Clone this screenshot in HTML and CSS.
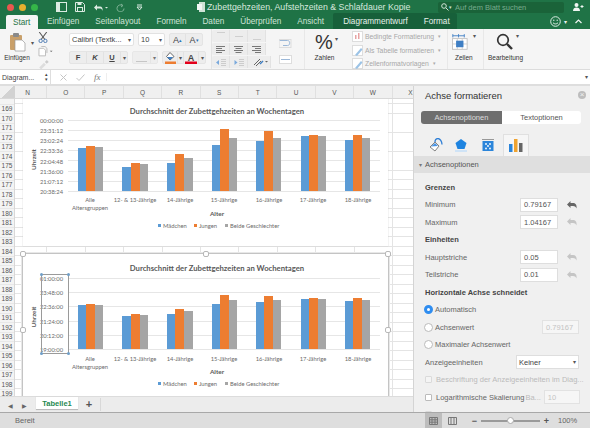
FILE: index.html
```html
<!DOCTYPE html>
<html lang="de">
<head>
<meta charset="utf-8">
<title>Excel</title>
<link rel="stylesheet" href="styles.css">
</head>
<body>
<div class="app">
  <header class="titlebar">
    <div class="lights"><i class="l red"></i><i class="l yellow"></i><i class="l green"></i></div>
    <div class="qa">
      <svg width="11" height="10" viewBox="0 0 11 10"><rect x=".5" y=".5" width="10" height="9" fill="none" stroke="#dcebe2"/><rect x="1" y="1" width="3" height="8" fill="#dcebe2"/></svg>
      <svg width="10" height="10" viewBox="0 0 10 10"><path d="M.5.5h7l2 2v7h-9z" fill="none" stroke="#dcebe2"/><rect x="2.500" y="5.500" width="5" height="4" fill="none" stroke="#dcebe2"/><rect x="2.500" y="1" width="4" height="2" fill="#dcebe2"/></svg>
      <svg width="15" height="9" viewBox="0 0 15 9"><path d="M1 4.500 4 1.500v2h3c2 0 3 1.500 2.500 4.500C9 6 8 5.500 6.500 5.500H4v2z" fill="#dcebe2"/><path d="m12 4 1.500 1.500L15 4z" fill="#dcebe2"/></svg>
      <svg width="9" height="9" viewBox="0 0 9 9"><path d="M6.500 2.500A3.500 3.500 0 1 0 8 5.500M5 1l2 1.500L5 4" fill="none" stroke="#7fb295"/></svg>
      <svg class="qa-more" width="7" height="7" viewBox="0 0 7 7"><path d="M1 1h5M1 3h5L3.500 6z" fill="none" stroke="#dcebe2"/></svg>
    </div>
    <div class="doc">
      <svg width="8" height="10" viewBox="0 0 8 10"><path d="M2 0h6v10H2z" fill="#cfe3d7"/><path d="M0 2h5v6H0z" fill="#f2f7f4"/></svg>
      <span>Zubettgehzeiten, Aufstehzeiten &amp; Schlafdauer Kopie</span>
    </div>
    <div class="search">
      <svg width="8" height="8" viewBox="0 0 8 8"><circle cx="3" cy="3" r="2.300" fill="none" stroke="#cfe3d7"/><path d="m5 5 2.500 2.500" stroke="#cfe3d7"/></svg>
      <span class="search-caret">▾</span><span>Auf dem Blatt suchen</span>
    </div>
    <svg class="person" width="11" height="8" viewBox="0 0 11 8"><circle cx="3.500" cy="2" r="2" fill="#f0f6f2"/><path d="M0 8c0-2.500 1.500-3.500 3.500-3.500S7 5.500 7 8z" fill="#f0f6f2"/><path d="M7.500 3.500h3M9 2v3" stroke="#f0f6f2"/></svg>
  </header>

  <nav class="tabs">
    <span class="tab active">Start</span>
    <span class="tab">Einfügen</span>
    <span class="tab">Seitenlayout</span>
    <span class="tab">Formeln</span>
    <span class="tab">Daten</span>
    <span class="tab">Überprüfen</span>
    <span class="tab">Ansicht</span>
    <div class="chart-tabs">
      <span class="tab strong">Diagrammentwurf</span>
      <span class="tab strong">Format</span>
    </div>
    <div class="tabs-end">
      <svg width="11" height="11" viewBox="0 0 11 11"><circle cx="5.500" cy="5.500" r="4.800" fill="none" stroke="#dcebe2"/><circle cx="3.800" cy="4.300" r=".7" fill="#dcebe2"/><circle cx="7.200" cy="4.300" r=".7" fill="#dcebe2"/><path d="M3 6.800c1.500 1.500 3.500 1.500 5 0" fill="none" stroke="#dcebe2"/></svg>
      <span class="mini">▾</span>
      <svg width="7" height="5" viewBox="0 0 7 5"><path d="m.5 4 3-3 3 3" fill="none" stroke="#f0f6f2" stroke-width="1.200"/></svg>
    </div>
  </nav>

  <section class="ribbon">
    <div class="g-clip">
      <div class="paste">
        <svg width="17" height="20" viewBox="0 0 17 20"><rect x="1" y="3" width="12" height="15" rx="1" fill="#c9a06a"/><rect x="4" y="1" width="6" height="4" rx="1" fill="#8a8a8a"/><path d="M6 8h7l3 3v8H6z" fill="#fff" stroke="#9a9a9a" stroke-width=".7"/></svg>
        <span class="glabel">Einfügen</span>
      </div>
      <span class="mini paste-caret">▾</span>
      <div class="clip-tools">
        <svg width="10" height="12" viewBox="0 0 10 12"><path d="M1 0l6 8M9 0 3 8" stroke="#555" stroke-width="1.100"/><circle cx="2.500" cy="9.500" r="1.800" fill="none" stroke="#4a78b0"/><circle cx="7.500" cy="9.500" r="1.800" fill="none" stroke="#4a78b0"/></svg>
        <svg width="16" height="11" viewBox="0 0 16 11"><path d="M.5 2.500h5l2 2v6h-7z" fill="#fff" stroke="#bbb"/><path d="M3 .5h4l2 2v5" fill="none" stroke="#bbb"/><path d="m12 5 1.500 1.500L15 5z" fill="#666"/></svg>
        <svg width="11" height="10" viewBox="0 0 11 10"><path d="M1 8 6 3l2 2-5 5z" fill="#ddd"/><path d="m7 2 2-2 2 2-2 2z" fill="#ccc"/></svg>
      </div>
    </div>

    <div class="g-font">
      <div class="rrow">
        <div class="combo w-font"><span>Calibri (Textk...</span><b class="mini">▾</b></div>
        <div class="combo w-size"><span>10</span><b class="mini">▾</b></div>
        <div class="btns"><span class="btn w-a big">A<em class="blue">▴</em></span><span class="btn w-a">A<em class="blue">▾</em></span></div>
      </div>
      <div class="rrow">
        <div class="btns"><span class="btn w-f">F</span><span class="btn w-f ital">K</span><span class="btn w-f under">U</span><span class="btn w-c"><b class="mini">▾</b></span></div>
        <div class="btns dim-btn"><span class="btn w-b"><i class="border-ico"></i></span><span class="btn w-c"><b class="mini">▾</b></span></div>
        <div class="btns">
          <span class="btn w-col"><svg width="11" height="12" viewBox="0 0 11 12"><path d="M5 .5 9 4.500 5 8 1.500 4.500z" fill="#fff" stroke="#666"/><path d="M2 5h6L5 8z" fill="#3f7fc4"/><rect y="9.500" width="11" height="2.500" fill="#ed7d31"/></svg></span><span class="btn w-c"><b class="mini">▾</b></span>
          <span class="btn w-col"><svg width="12" height="12" viewBox="0 0 12 12"><text class="fc-a" x="6" y="8.500" text-anchor="middle">A</text><rect y="9.500" width="12" height="2.500" fill="#e3001b"/></svg></span><span class="btn w-c"><b class="mini">▾</b></span>
        </div>
      </div>
    </div>

    <div class="g-align">
      <div class="arow">
        <span class="abtn"><i class="ln top"></i></span><span class="abtn"><i class="ln mid"></i></span><span class="abtn"><i class="ln bot"></i></span>
      </div>
      <div class="arow">
        <span class="abtn"><svg width="9" height="7" viewBox="0 0 9 7"><path d="M0 .5h9M0 2.500h6M0 4.500h9M0 6.500h6" stroke="#777"/></svg></span>
        <span class="abtn"><svg width="9" height="7" viewBox="0 0 9 7"><path d="M0 .5h9M1.500 2.500h6M0 4.500h9M1.500 6.500h6" stroke="#777"/></svg></span>
        <span class="abtn"><svg width="9" height="7" viewBox="0 0 9 7"><path d="M0 .5h9M3 2.500h6M0 4.500h9M3 6.500h6" stroke="#777"/></svg></span>
      </div>
      <div class="arow">
        <span class="abtn"><svg width="10" height="7" viewBox="0 0 10 7"><path d="M5 .5h5M5 2.500h5M5 4.500h5M5 6.500h5" stroke="#ccc"/><path d="M0 3.500 3 1v5z" fill="#7aa9dc"/></svg></span>
        <span class="abtn"><svg width="10" height="7" viewBox="0 0 10 7"><path d="M5 .5h5M5 2.500h5M5 4.500h5M5 6.500h5" stroke="#ccc"/><path d="M3.500 3.500.5 1v5z" fill="#7aa9dc"/></svg></span>
        <span class="abtn wide"><svg width="15" height="10" viewBox="0 0 15 10"><path d="m1 8 6-6M3 9l5-5" stroke="#666"/><path d="m7 7 3-3" stroke="#3f7fc4" stroke-width="1.400"/><path d="m12 4 1.500 1.500L15 4z" fill="#666"/></svg></span>
      </div>
    </div>

    <div class="g-wrap">
      <svg width="13" height="9" viewBox="0 0 13 9"><path d="M.5 1.500h8c3 0 3 5 0 5H4" fill="none" stroke="#9cb8d8"/><rect y=".5" width="12" height="8" fill="none" stroke="#ddd"/></svg>
      <svg width="13" height="9" viewBox="0 0 13 9"><rect x=".5" y=".5" width="12" height="8" fill="#fff" stroke="#ddd"/><path d="M2 4.500h9" stroke="#9cb8d8"/></svg>
    </div>

    <div class="g-num">
      <div class="pct">%<span class="mini">▾</span></div>
      <span class="glabel">Zahlen</span>
    </div>

    <div class="g-style">
      <div class="srow"><svg width="11" height="11" viewBox="0 0 11 11"><rect x=".5" y=".5" width="10" height="10" fill="#fff" stroke="#ddd"/><path d="M3 8V4h1.500v4zM6 8V2h1.500v6z" fill="#e7a3a3"/></svg><span>Bedingte Formatierung</span><b class="mini">▾</b></div>
      <div class="srow"><svg width="11" height="11" viewBox="0 0 11 11"><rect x=".5" y=".5" width="10" height="10" fill="#fff" stroke="#ddd"/><path d="m3 10 6-7 1.500 1.500L5 11z" fill="#9cc3e6"/></svg><span>Als Tabelle formatieren</span><b class="mini">▾</b></div>
      <div class="srow"><svg width="11" height="11" viewBox="0 0 11 11"><rect x=".5" y=".5" width="10" height="10" fill="#fff" stroke="#ddd"/><path d="m3 10 6-7 1.500 1.500L5 11z" fill="#9cc3e6"/></svg><span>Zellenformatvorlagen</span><b class="mini">▾</b></div>
    </div>

    <div class="g-cells">
      <div class="bigico">
        <svg width="18" height="17" viewBox="0 0 22 20"><path d="M1 1v4M8 1v4M15 1v4M1 3h14" stroke="#3f7fc4" stroke-width="1.100"/><rect x=".5" y="6.500" width="18" height="13" fill="#fff" stroke="#bbb"/><path d="M6.500 6.500v13M12.500 6.500v13M.5 13h18" stroke="#ccc"/><rect x="5" y="9" width="9" height="8" fill="#3f7fc4"/></svg>
        <span class="mini">▾</span>
      </div>
      <span class="glabel">Zellen</span>
    </div>

    <div class="g-edit">
      <div class="bigico">
        <svg width="17" height="17" viewBox="0 0 17 17"><circle cx="7" cy="7" r="5.300" fill="none" stroke="#333" stroke-width="1.700"/><path d="m11 11 5 5" stroke="#333" stroke-width="2.400"/></svg>
        <span class="mini">▾</span>
      </div>
      <span class="glabel">Bearbeitung</span>
    </div>
  </section>

  <section class="formula">
    <div class="namebox"><span>Diagram...</span><span class="stepper"><i>▴</i><i>▾</i></span></div>
    <div class="fx-tools">
      <svg width="7" height="7" viewBox="0 0 7 7"><path d="m.5.5 6 6M6.500.5l-6 6" stroke="#c4c4c4"/></svg>
      <svg width="9" height="7" viewBox="0 0 9 7"><path d="m.5 4 2.500 2.500L8.500.5" fill="none" stroke="#c4c4c4"/></svg>
      <span class="fx">fx</span>
    </div>
    <div class="finput"><span class="mini">▾</span></div>
  </section>

  <div class="main">
    <div class="left">
      <div class="colhead">
        <span class="corner"></span>
        <span class="col c-n">N</span><span class="col">O</span><span class="col">P</span><span class="col">Q</span><span class="col">R</span><span class="col">S</span><span class="col">T</span><span class="col">U</span><span class="col">V</span><span class="col">W</span><span class="col c-x">X</span>
      </div>
      <div class="sheet">
        <div class="rows">
          <span class="row r-cut"></span><span class="row">169</span><span class="row">170</span><span class="row">171</span><span class="row">172</span><span class="row">173</span><span class="row">174</span><span class="row">175</span><span class="row">176</span><span class="row">177</span><span class="row">178</span><span class="row">179</span><span class="row">180</span><span class="row">181</span><span class="row">182</span><span class="row">183</span><span class="row">184</span><span class="row">185</span><span class="row">186</span><span class="row">187</span><span class="row">188</span><span class="row">189</span><span class="row">190</span><span class="row">191</span><span class="row">192</span><span class="row">193</span><span class="row">194</span><span class="row">195</span><span class="row">196</span><span class="row">197</span><span class="row">198</span><span class="row">199</span>
        </div>
        <div class="cells"></div>

        <svg class="chart chart-a" width="365" height="147" viewBox="23 100 365 147">
          <rect x="23" y="100" width="365" height="147" fill="#fff"/>
          <text class="ct" x="217" y="115" text-anchor="middle">Durchschnitt der Zubettgehzeiten an Wochentagen</text>
          <g class="grid"><path d="M68 121.500h312M68 131.500h312M68 141.500h312M68 151.500h312M68 161.500h312M68 172.500h312M68 182.500h312M68 192.500h312"/></g>
          <g class="ylab" text-anchor="end"><text x="63" y="124">00:00:00</text><text x="63" y="134">23:31:12</text><text x="63" y="144">23:02:24</text><text x="63" y="154">22:33:36</text><text x="63" y="164.500">22:04:48</text><text x="63" y="175">21:36:00</text><text x="63" y="185">21:07:12</text><text x="63" y="195">20:38:24</text></g>
          <g class="bb"><rect x="78" y="149" width="8" height="43"/><rect x="122" y="168" width="9" height="24"/><rect x="167" y="164" width="8" height="28"/><rect x="212" y="146" width="8" height="46"/><rect x="256" y="142" width="8" height="50"/><rect x="301" y="137" width="8" height="55"/><rect x="345" y="141" width="8" height="51"/></g>
          <g class="bo"><rect x="86" y="147" width="9" height="45"/><rect x="131" y="164" width="9" height="28"/><rect x="175" y="155" width="9" height="37"/><rect x="220" y="130" width="9" height="62"/><rect x="264" y="132" width="9" height="60"/><rect x="309" y="136" width="9" height="56"/><rect x="353" y="136" width="9" height="56"/></g>
          <g class="bg"><rect x="95" y="148" width="8" height="44"/><rect x="140" y="165" width="8" height="27"/><rect x="184" y="159" width="9" height="33"/><rect x="229" y="139" width="8" height="53"/><rect x="273" y="139" width="8" height="53"/><rect x="318" y="137" width="8" height="55"/><rect x="362" y="139" width="8" height="53"/></g>
          <g class="xlab" text-anchor="middle"><text x="90" y="203">Alle</text><text x="90" y="211">Altersgruppen</text><text x="135" y="203">12- &amp; 13-Jährige</text><text x="180" y="203">14-Jährige</text><text x="224" y="203">15-Jährige</text><text x="269" y="203">16-Jährige</text><text x="313" y="203">17-Jährige</text><text x="358" y="203">18-Jährige</text></g>
          <text class="at" x="217" y="216.500" text-anchor="middle">Alter</text>
          <text class="at" transform="translate(35.500 160.500) rotate(-90)" text-anchor="middle">Uhrzeit</text>
          <g class="leg"><rect class="lb" x="158" y="225" width="3" height="3"/><text x="163" y="229">Mädchen</text><rect class="lo" x="194" y="225" width="3" height="3"/><text x="199" y="229">Jungen</text><rect class="lg" x="225" y="225" width="3" height="3"/><text x="230" y="229">Beide Geschlechter</text></g>
        </svg>

        <div class="frame">
          <svg class="chart-in" width="365" height="143" viewBox="23 255 365 143">
            <rect x="23" y="255" width="365" height="143" fill="#fff"/>
            <text class="ct" x="217" y="272" text-anchor="middle">Durchschnitt der Zubettgehzeiten an Wochentagen</text>
            <g class="grid"><path d="M68 279.500h312M68 293.500h312M68 307.500h312M68 322.500h312M68 336.500h312M68 350.500h312"/></g>
            <g class="bb"><rect x="78" y="306" width="8" height="44"/><rect x="122" y="317" width="9" height="33"/><rect x="167" y="315" width="8" height="35"/><rect x="212" y="305" width="8" height="45"/><rect x="256" y="303" width="8" height="47"/><rect x="301" y="300" width="8" height="50"/><rect x="345" y="302" width="8" height="48"/></g>
            <g class="bo"><rect x="86" y="305" width="9" height="45"/><rect x="131" y="315" width="9" height="35"/><rect x="175" y="310" width="9" height="40"/><rect x="220" y="296" width="9" height="54"/><rect x="264" y="297" width="9" height="53"/><rect x="309" y="299" width="9" height="51"/><rect x="353" y="299" width="9" height="51"/></g>
            <g class="bg"><rect x="95" y="306" width="8" height="44"/><rect x="140" y="316" width="8" height="34"/><rect x="184" y="312" width="9" height="38"/><rect x="229" y="301" width="8" height="49"/><rect x="273" y="301" width="8" height="49"/><rect x="318" y="300" width="8" height="50"/><rect x="362" y="301" width="8" height="49"/></g>
            <g class="ylab" text-anchor="end"><text x="63" y="282">01:00:00</text><text x="63" y="296">23:48:00</text><text x="63" y="310">22:36:00</text><text x="63" y="325">21:24:00</text><text x="63" y="339">20:12:00</text><text x="63" y="353">19:00:00</text></g>
            <rect class="sel" x="41.500" y="275.500" width="27" height="79"/>
            <g class="seld"><circle cx="41.500" cy="275.500" r="1.500"/><circle cx="68.500" cy="275.500" r="1.500"/><circle cx="41.500" cy="354.500" r="1.500"/><circle cx="68.500" cy="354.500" r="1.500"/></g>
            <g class="xlab" text-anchor="middle"><text x="90" y="361.500">Alle</text><text x="90" y="369.500">Altersgruppen</text><text x="135" y="361.500">12- &amp; 13-Jährige</text><text x="180" y="361.500">14-Jährige</text><text x="224" y="361.500">15-Jährige</text><text x="269" y="361.500">16-Jährige</text><text x="313" y="361.500">17-Jährige</text><text x="358" y="361.500">18-Jährige</text></g>
            <text class="at" x="217" y="375" text-anchor="middle">Alter</text>
            <text class="at" transform="translate(35.500 318) rotate(-90)" text-anchor="middle">Uhrzeit</text>
            <g class="leg"><rect class="lb" x="158" y="383" width="3" height="3"/><text x="163" y="387">Mädchen</text><rect class="lo" x="194" y="383" width="3" height="3"/><text x="199" y="387">Jungen</text><rect class="lg" x="225" y="383" width="3" height="3"/><text x="230" y="387">Beide Geschlechter</text></g>
          </svg>
          <i class="h h-tl"></i><i class="h h-tm"></i><i class="h h-tr"></i><i class="h h-ml"></i><i class="h h-mr"></i>
        </div>
      </div>
      <div class="sheettabs">
        <span class="arrow">◀</span><span class="arrow">▶</span>
        <span class="stab">Tabelle1</span>
        <span class="addtab">+</span>
      </div>
    </div>

    <aside class="panel">
      <div class="p-title"><span>Achse formatieren</span><i class="p-close">×</i></div>
      <div class="seg"><span class="seg-on">Achsenoptionen</span><span class="seg-off">Textoptionen</span></div>
      <div class="p-icons">
        <span class="p-ic"><svg width="14" height="14" viewBox="0 0 14 14"><path d="M1 9 6 4l4 4-4 5z" fill="#fff" stroke="#666" stroke-width=".8"/><path d="M6 4c0-2 1-3.500 3-3.500s4 3 4 6" fill="none" stroke="#2f7fd6" stroke-width="1.300"/><path d="M2 8.500 6 5l3 3z" fill="#4a94e4"/></svg></span>
        <span class="p-ic"><svg width="12" height="14" viewBox="0 0 12 14"><path d="M6 1l5.500 4-2 6h-7l-2-6z" fill="#1f84e0"/><rect y="12" width="12" height="2" fill="#cfe3f6"/></svg></span>
        <span class="p-ic"><svg width="12" height="12" viewBox="0 0 12 12"><rect x=".5" y="2" width="11" height="10" fill="#2b85da"/><path d="M0 .5h12" stroke="#999"/><g fill="#fff"><circle cx="4" cy="5" r=".9"/><circle cx="8" cy="5" r=".9"/><circle cx="6" cy="7" r=".9"/><circle cx="4" cy="9.500" r=".9"/><circle cx="8" cy="9.500" r=".9"/></g></svg></span>
        <span class="p-ic on"><svg width="14" height="13" viewBox="0 0 14 13"><rect x="0" y="5" width="3.500" height="8" fill="#2b85da"/><rect x="5" y="0" width="3.500" height="13" fill="#f0a32f"/><rect x="10" y="4" width="3.500" height="9" fill="#666"/></svg></span>
      </div>
      <div class="p-sec"><b class="tri">▾</b>Achsenoptionen</div>
      <div class="p-body">
        <div class="pr bold">Grenzen</div>
        <div class="pr"><label>Minimum</label><span class="inp">0.79167</span><svg class="undo" width="10" height="8" viewBox="0 0 10 8"><path d="M0 3.500 3.500 0v2H6c3 0 4 2.500 3.500 5.500C9 6 8 5 6 5H3.500v2z" fill="#666"/></svg></div>
        <div class="pr"><label>Maximum</label><span class="inp">1.04167</span><svg class="undo faint" width="10" height="8" viewBox="0 0 10 8"><path d="M0 3.500 3.500 0v2H6c3 0 4 2.500 3.500 5.500C9 6 8 5 6 5H3.500v2z" fill="#666"/></svg></div>
        <div class="pr bold">Einheiten</div>
        <div class="pr"><label>Hauptstriche</label><span class="inp">0.05</span><svg class="undo faint" width="10" height="8" viewBox="0 0 10 8"><path d="M0 3.500 3.500 0v2H6c3 0 4 2.500 3.500 5.500C9 6 8 5 6 5H3.500v2z" fill="#666"/></svg></div>
        <div class="pr"><label>Teilstriche</label><span class="inp">0.01</span><svg class="undo faint" width="10" height="8" viewBox="0 0 10 8"><path d="M0 3.500 3.500 0v2H6c3 0 4 2.500 3.500 5.500C9 6 8 5 6 5H3.500v2z" fill="#666"/></svg></div>
        <div class="pr bold">Horizontale Achse schneidet</div>
        <div class="pr"><i class="radio on"></i><label>Automatisch</label></div>
        <div class="pr"><i class="radio"></i><label>Achsenwert</label><span class="inp off">0.79167</span></div>
        <div class="pr"><i class="radio"></i><label>Maximaler Achsenwert</label></div>
        <div class="pr"><label>Anzeigeeinheiten</label><span class="sel-box"><span>Keiner</span><b class="mini">▾</b></span></div>
        <div class="pr"><i class="check off"></i><label class="dis">Beschriftung der Anzeigeeinheiten im Diag...</label></div>
        <div class="pr"><i class="check"></i><label>Logarithmische Skalierung</label><span class="ba">Ba...</span><span class="inp off base">10</span></div>
        <div class="pr"><i class="check off"></i></div>
      </div>
    </aside>
  </div>

  <footer class="status">
    <span class="ready">Bereit</span>
    <span class="view on"><svg width="9" height="8" viewBox="0 0 9 8"><path d="M.5.5h8v7h-8zM3 .5v7M6 .5v7M.5 2.800h8M.5 5.200h8" fill="none" stroke="#777"/></svg></span>
    <span class="view"><svg width="9" height="8" viewBox="0 0 9 8"><path d="M.5.5h8v7h-8zM3 .5v7M6 .5v7" fill="none" stroke="#777"/></svg></span>
    <span class="zm">−</span>
    <span class="slider"><i></i></span>
    <span class="zm">+</span>
    <span class="pctz">100%</span>
  </footer>
</div>
</body>
</html>
```

FILE: styles.css
```css
* { box-sizing: border-box; }
html, body { margin: 0; padding: 0; }
body { background: #fff; font-family: "Liberation Sans", Arial, sans-serif; color: #333; }
i, em { font-style: normal; }
.app { width: 590px; height: 429px; overflow: hidden; display: flex; flex-direction: column; }
.mini { font-size: 6px; font-weight: normal; color: #555; line-height: 1; }

/* title bar */
.titlebar { height: 14px; background: #1f7346; display: flex; align-items: center; color: #d7e8de; flex: none; }
.lights { display: flex; gap: 5px; margin-left: 7px; width: 44px; }
.l { width: 7px; height: 7px; border-radius: 50%; display: block; }
.red { background: #e9584f; } .yellow { background: #e7b02e; } .green { background: #35b548; }
.qa { display: flex; align-items: center; gap: 8px; margin-left: 5px; width: 141px; }
.qa-more { margin-left: 3px; }
.doc { display: flex; align-items: center; gap: 2px; font-size: 8.800px; width: 241px; white-space: nowrap; }
.search { width: 126px; height: 11px; background: #1a6339; border-radius: 2px; display: flex; align-items: center; font-size: 7.500px; color: #78ab8d; padding-left: 3px; }
.search-caret { font-size: 5px; color: #cfe3d7; margin-right: 3px; }
.person { margin-left: 9px; }

/* tabs */
.tabs { height: 15px; background: #1f7346; display: flex; align-items: stretch; font-size: 8.200px; color: #cfe3d7; flex: none; padding-left: 6px; }
.tab { display: flex; align-items: center; margin-right: 16px; white-space: nowrap; }
.tab.active { background: #f5f5f5; color: #1f7346; padding: 0 7px; margin-right: 9px; border-radius: 2px 2px 0 0; width: 32px; margin-top: 1px; }
.chart-tabs { display: flex; background: #17603a; margin-left: -7px; width: 124px; padding-left: 10px; color: #e8f2ec; border-radius: 2px 2px 0 0; margin-top: -1px; margin-right: auto; }
.tabs-end { display: flex; align-items: center; gap: 3px; margin-right: 8px; }
.tabs-end .mini { color: #e8f2ec; margin-right: 5px; }

/* ribbon */
.ribbon { height: 41px; background: #f5f5f5; border-bottom: 1px solid #dcdcdc; display: flex; flex: none; color: #444; font-size: 7px; }
.glabel { font-size: 6.500px; color: #333; white-space: nowrap; }
.g-clip { width: 69px; display: flex; padding: 3px 0 0 5px; }
.paste { width: 24px; display: flex; flex-direction: column; align-items: center; gap: 2px; }
.paste-caret { margin: 8px 0 0 2px; }
.clip-tools { display: flex; flex-direction: column; margin-left: 4px; gap: 3px; }
.g-font { width: 142px; display: flex; flex-direction: column; gap: 5px; padding-top: 4px; }
.rrow { display: flex; gap: 4px; height: 13px; }
.combo { background: #fff; border: 1px solid #e2e2e2; border-radius: 2px; height: 13px; display: flex; align-items: center; justify-content: space-between; padding: 0 2px; font-size: 7.500px; color: #444; }
.w-font { width: 65px; } .w-size { width: 27px; }
.btns { display: flex; background: #ededed; border: 1px solid #e4e4e4; border-radius: 2px; height: 13px; }
.btn { display: flex; align-items: center; justify-content: center; font-size: 8px; color: #444; border-right: 1px solid #e2e2e2; height: 100%; }
.btn:last-child { border-right: 0; }
.w-a { width: 16px; font-size: 9px; }
.w-a em { font-size: 5px; }
.blue { color: #2e75b6; }
.w-f { width: 17px; font-weight: bold; font-size: 7.500px; }
.ital { font-style: italic; }
.under { text-decoration: underline; }
.w-c { width: 6px; }
.w-b { width: 18px; }
.w-col { width: 15px; }
.border-ico { width: 11px; height: 9px; border-bottom: 1px solid #bbb; display: block; }
.dim-btn { opacity: .8; }
.fc-a { font: bold 9px "Liberation Sans", sans-serif; fill: #444; }
.g-align { width: 66px; padding-top: 1px; border-left: 1px solid #e4e4e4; display: flex; flex-direction: column; align-items: flex-start; }
.arow { display: flex; height: 13px; margin-bottom: 1px; background: #ededed; border-radius: 2px; }
.abtn { width: 18px; display: flex; align-items: center; justify-content: center; border-right: 1px solid #e2e2e2; }
.abtn.wide { width: 20px; margin-left: 3px; }
.ln { width: 8px; height: 1px; background: #cfcfcf; display: block; }
.ln.top { margin-bottom: 7px; } .ln.bot { margin-top: 7px; }
.g-wrap { width: 27px; display: flex; flex-direction: column; gap: 7px; padding: 10px 0 0 2px; }
.g-num { width: 40px; display: flex; flex-direction: column; align-items: center; border-left: 1px solid #e8e8e8; padding-top: 3px; }
.pct { font-size: 20px; line-height: 20px; color: #333; display: flex; height: 22px; margin-left: 4px; }
.pct .mini { margin: 4px 0 0 2px; }
.g-style { width: 103px; display: flex; flex-direction: column; gap: 2.500px; padding: 2px 0 0 8px; }
.srow { display: flex; align-items: center; gap: 2px; font-size: 6.800px; color: #a8a8a8; white-space: nowrap; height: 11px; }
.srow .mini { color: #aaa; margin-left: 2px; font-size: 5px; }
.g-cells { width: 36px; display: flex; flex-direction: column; align-items: flex-start; padding: 4px 0 0 4px; border-left: 1px solid #e8e8e8; }
.bigico { display: flex; height: 21px; align-items: flex-start; gap: 3px; }
.g-cells .glabel { margin-left: 3px; }
.g-edit { width: 50px; display: flex; flex-direction: column; align-items: flex-start; padding: 4px 0 0 4px; border-left: 1px solid #e8e8e8; }
.g-edit .bigico { margin-left: 8px; }

/* formula bar */
.formula { height: 16px; background: #fff; display: flex; flex: none; align-items: stretch; border-bottom: 2px solid #dedede; }
.namebox { width: 51px; border-right: 1px solid #dedede; display: flex; align-items: center; justify-content: space-between; padding: 0 2px; font-size: 7px; color: #444; }
.stepper { display: flex; flex-direction: column; font-size: 5px; line-height: 5px; }
.fx-tools { width: 56px; display: flex; align-items: center; gap: 9px; padding-left: 9px; border-right: 1px solid #eee; margin: 3px 0; }
.fx { font: italic 9px "Liberation Serif", serif; color: #777; }
.finput { flex: 1; display: flex; align-items: center; justify-content: flex-end; padding-right: 2px; }

/* main area */
.main { height: 326px; display: flex; flex: none; }
.left { width: 413px; display: flex; flex-direction: column; }
.colhead { height: 13px; background: #f0f0f0; display: flex; border-bottom: 1px solid #d8d8d8; flex: none; overflow: hidden; }
.corner { width: 15px; flex: none; background: linear-gradient(135deg, #f0f0f0 50%, #d2d2d2 50%); }
.col { width: 38.400px; font-size: 6.500px; color: #555; display: flex; align-items: center; justify-content: center; border-right: 1px solid #e0e0e0; flex: none; }
.c-n { width: 32px; padding-right: 6px; }
.c-x { width: 20px; justify-content: flex-end; border-right: 0; }
.sheet { flex: 1; position: relative; overflow: hidden; display: flex; background: #fff; }
.rows { width: 15px; display: flex; flex-direction: column; background: #f4f4f4; border-right: 1px solid #d8d8d8; flex: none; }
.row { height: 9.500px; flex: none; font-size: 6.500px; color: #555; display: flex; align-items: center; justify-content: center; border-bottom: 1px solid #e8e8e8; }
.r-cut { height: 5.500px; }
.cells { flex: 1; background-image: repeating-linear-gradient(to right, transparent 0, transparent 37.400px, #e4e4e4 37.400px, #e4e4e4 38.400px), repeating-linear-gradient(to bottom, transparent 0, transparent 8.500px, #e4e4e4 8.500px, #e4e4e4 9.500px); background-position: -6px 0, 0 -4px; }
.chart { position: absolute; left: 23px; top: 0; box-shadow: 0 0 1px #bbb; }
.frame { position: absolute; left: 22px; top: 154px; width: 367px; height: 150px; border: 1px solid #c4c4c4; outline: 1px solid #e8e8e8; background: #fff; }
.chart-in { display: block; }
.h { position: absolute; width: 6px; height: 6px; background: #fff; border: 1px solid #b8b8b8; border-radius: 2px; display: block; }
.h-tl { left: -3px; top: -3px; } .h-tm { left: 180px; top: -3px; } .h-tr { right: -3px; top: -3px; }
.h-ml { left: -3px; top: 73px; } .h-mr { right: -3px; top: 73px; }

.ct { font: bold 7.700px "Lato", sans-serif; fill: #595959; }
.at { font: bold 6.400px "Lato", sans-serif; fill: #595959; }
.grid path { stroke: #e6e6e6; stroke-width: 1; fill: none; }
.ylab text, .xlab text, .leg text { font: 5.800px "Lato", sans-serif; fill: #6a6a6a; }
.bb rect, .lb { fill: #5b9bd5; }
.bo rect, .lo { fill: #ed7d31; }
.bg rect, .lg { fill: #a5a5a5; }
.sel { fill: none; stroke: #9a9a9a; stroke-width: 1; }
.seld circle { fill: #6f9fc9; }

/* sheet tabs */
.sheettabs { height: 16px; background: #ececec; border-top: 1px solid #dcdcdc; display: flex; align-items: flex-start; flex: none; }
.arrow { font-size: 6px; color: #666; margin: 5px 0 0 8px; width: 6px; }
.stab { margin-left: 8px; width: 42px; height: 13px; background: #fff; color: #1f8a50; font-size: 7.500px; font-weight: bold; display: flex; align-items: center; justify-content: center; border-bottom: 1px solid #bbb; box-shadow: 0 0 1px #ccc; }
.addtab { width: 23px; height: 13px; font-size: 11px; font-weight: bold; color: #555; text-align: center; line-height: 12px; border-right: 1px solid #d8d8d8; margin-top: 1px; }

/* panel */
.panel { width: 177px; background: #f0f0f0; border-left: 1px solid #d4d4d4; display: flex; flex-direction: column; flex: none; overflow: hidden; }
.p-title { height: 18px; display: flex; align-items: center; justify-content: space-between; padding: 0 4px 0 11px; font-size: 9.500px; color: #333; flex: none; }
.p-close { width: 8px; height: 8px; border-radius: 50%; background: #bdbdbd; color: #f0f0f0; font-size: 8px; line-height: 8px; text-align: center; display: block; }
.seg { height: 13px; margin: 7px 9px 0 7px; display: flex; font-size: 7.500px; flex: none; border-radius: 3px; overflow: hidden; }
.seg-on { width: 81px; background: #6e6e6e; color: #ddd; display: flex; align-items: center; justify-content: center; }
.seg-off { flex: 1; background: #fff; color: #555; display: flex; align-items: center; justify-content: center; }
.p-icons { height: 22px; margin-top: 10px; display: flex; align-items: stretch; flex: none; padding-left: 9px; }
.p-ic { width: 25px; display: flex; align-items: center; justify-content: center; }
.p-ic:nth-child(3) { margin-left: 2px; }
.p-ic.on { background: #f6f6f6; border: 1px solid #e0e0e0; border-bottom: 0; width: 26px; margin-left: 3px; }
.p-sec { height: 17px; background: #dfdfdf; font-size: 7.500px; color: #555; display: flex; align-items: center; padding-left: 5px; flex: none; }
.tri { font-size: 6px; margin-right: 3px; color: #777; font-weight: normal; }
.p-body { padding: 7px 0 0 11px; display: flex; flex-direction: column; gap: 3.500px; flex: 1; font-size: 7.500px; color: #666; }
.pr { height: 14px; display: flex; align-items: center; white-space: nowrap; flex: none; position: relative; }
.pr label { display: block; }
.bold { font-weight: bold; color: #444; font-size: 7.500px; }
.inp { width: 38px; height: 14px; background: #fff; border: 1px solid #dedede; font-size: 7.500px; color: #555; display: flex; align-items: center; padding-left: 3px; margin-left: auto; margin-right: 32px; }
.undo { position: absolute; right: 13px; top: 3px; }
.faint { opacity: .3; }
.radio { width: 9px; height: 9px; border-radius: 50%; background: #fff; border: 1px solid #bbb; margin-right: 2px; display: block; flex: none; margin-left: -1px; }
.radio.on { border: 3px solid #2f8df0; }
.check { width: 7px; height: 7px; background: #fff; border: 1px solid #bbb; border-radius: 1px; margin-right: 4px; display: block; flex: none; }
.check.off { border-color: #dadada; background: #f4f4f4; }
.dis { color: #bbb; }
.inp.off { color: #c4c4c4; border-color: #e2e2e2; background: #f6f6f6; margin-right: 11px; width: 37px; }
.inp.base { margin-left: 3px; margin-right: 10px; }
.ba { color: #bbb; margin-left: 1px; }
.sel-box { width: 63px; height: 14px; margin-left: auto; margin-right: 11px; background: #fff; border: 1px solid #dedede; display: flex; align-items: center; justify-content: space-between; padding: 0 2px; color: #444; }

/* status bar */
.status { height: 16px; background: #dedede; border-top: 1px solid #a8a8a8; display: flex; align-items: center; font-size: 7.500px; color: #666; flex: none; }
.ready { margin-left: 15px; width: 410px; }
.view { width: 17px; height: 15px; display: flex; align-items: center; justify-content: center; }
.view.on { background: #bdbdbd; }
.view + .view { margin-left: 2px; }
.zm { font-size: 9px; font-weight: bold; margin-left: 10px; color: #555; width: 7px; text-align: center; }
.slider { width: 59px; height: 2px; background: #9a9a9a; position: relative; margin-left: 3px; display: block; }
.slider i { position: absolute; left: 26px; top: -3px; width: 7px; height: 7px; border-radius: 50%; background: #fff; border: 1px solid #aaa; display: block; }
.slider + .zm { margin-left: 3px; }
.pctz { margin-left: 8px; }
```
